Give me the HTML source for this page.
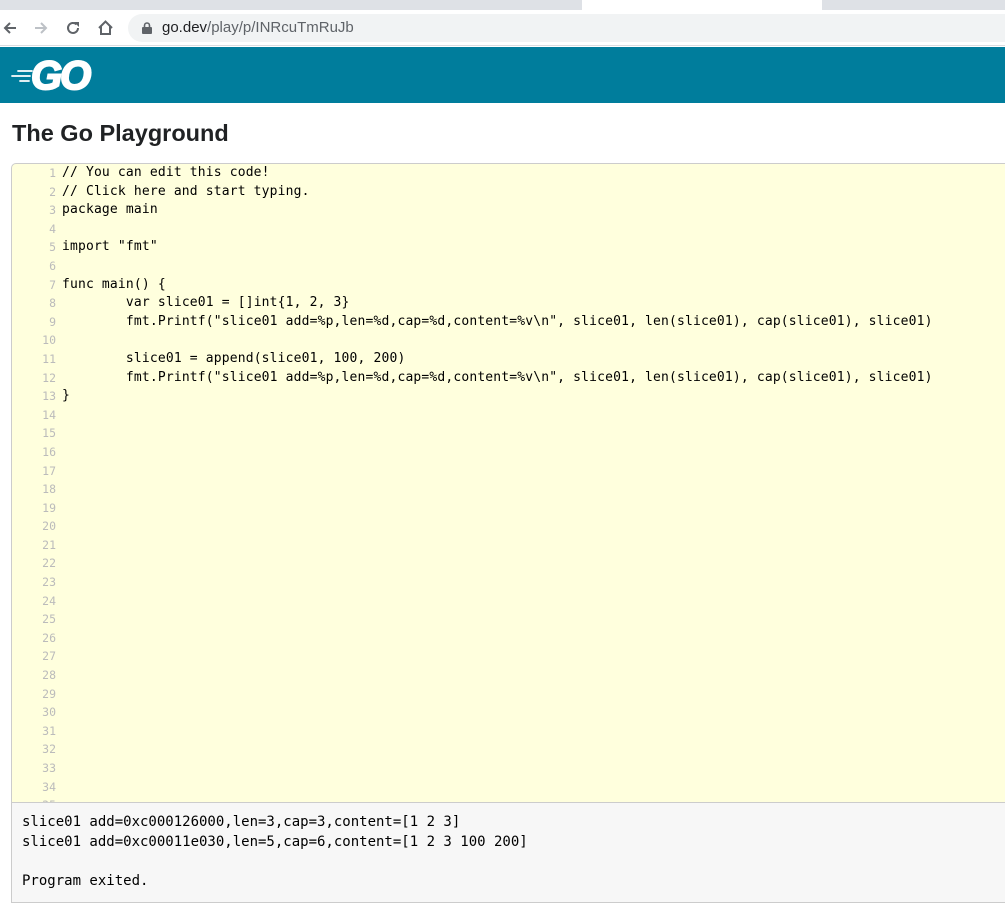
<!DOCTYPE html>
<html><head><style>
*{margin:0;padding:0;box-sizing:border-box}
body{width:1005px;height:903px;overflow:hidden;background:#fff;font-family:"Liberation Sans",sans-serif;position:relative}
.tabbar{position:absolute;left:0;top:0;width:1005px;height:10px;background:#dee1e6}
.tab{position:absolute;top:0;height:10px;background:#fff}
.addr{position:absolute;left:0;top:10px;width:1005px;height:36px;background:#fff;border-bottom:1px solid #dadce0}
.omni{position:absolute;left:128px;top:4px;width:900px;height:28px;border-radius:14px;background:#f1f3f4}
.url{position:absolute;left:162px;top:9px;font-size:15px;color:#202124}
.url span{color:#5f6368}
.hdr{position:absolute;left:0;top:47px;width:1005px;height:56px;background:#007d9c}
h1{position:absolute;left:12px;top:120px;font-size:23.5px;font-weight:bold;color:#202224}
.ed{position:absolute;left:11px;top:163px;width:1010px;height:740px;border:1px solid #ccc;border-radius:5px 0 0 0;background:#ffffdd;overflow:hidden}
.ln{position:absolute;left:0;top:0;width:44px;text-align:right;font-family:"DejaVu Sans Mono",monospace;font-size:11.5px;color:#bbb;line-height:18.6px}
.code{position:absolute;left:50px;top:0;font-family:"DejaVu Sans Mono",monospace;font-size:13px;letter-spacing:0.16px;line-height:18.6px;color:#000;white-space:pre;tab-size:8}
.out{position:absolute;left:0;top:638px;width:1010px;height:110px;background:#f7f7f7;border-top:1px solid #ccc;font-family:"DejaVu Sans Mono",monospace;font-size:14px;line-height:19.5px;color:#000;white-space:pre;padding:10px 0 0 10px}
</style></head><body>
<div class="tabbar">
<div class="tab" style="left:0;width:100px;background:#dee1e6"></div>
<div class="tab" style="left:582px;width:240px"></div>
</div>
<div class="addr">
<svg style="position:absolute;left:2px;top:10px" width="16" height="16" viewBox="0 0 16 16"><path d="M14 8H3M8 3L3 8l5 5" stroke="#5f6368" stroke-width="2" fill="none"/></svg>
<svg style="position:absolute;left:33px;top:10px" width="16" height="16" viewBox="0 0 16 16"><path d="M2 8h11M8 3l5 5-5 5" stroke="#bdc1c6" stroke-width="2" fill="none"/></svg>
<svg style="position:absolute;left:65px;top:10px" width="16" height="16" viewBox="0 0 16 16"><path d="M13 8a5 5 0 1 1-1.5-3.6" stroke="#5f6368" stroke-width="2" fill="none"/><path d="M9 2h5v5z" fill="#5f6368"/></svg>
<svg style="position:absolute;left:97px;top:9px" width="17" height="17" viewBox="0 0 17 17"><path d="M2 9L8.5 2.5 15 9M4 7.5V15h9V7.5" stroke="#5f6368" stroke-width="2" fill="none"/></svg>
<div class="omni"></div>
<svg style="position:absolute;left:142px;top:12px" width="10" height="12" viewBox="0 0 10 12"><rect x="0" y="5" width="10" height="7" rx="1" fill="#5f6368"/><path d="M2.5 5V3.5a2.5 2.5 0 0 1 5 0V5" stroke="#5f6368" stroke-width="1.6" fill="none"/></svg>
<div class="url">go.dev<span>/play/p/INRcuTmRuJb</span></div>
</div>
<div class="hdr">
<svg style="position:absolute;left:10px;top:10px" width="90" height="36" viewBox="0 0 90 36">
<g stroke="#fff" stroke-width="1.8" stroke-linecap="round"><path d="M8 14h14M2 19h18M10 24h9"/></g>
<text x="21" y="32" font-family="Liberation Sans" font-weight="bold" font-style="italic" font-size="40" fill="#fff" stroke="#fff" stroke-width="2" letter-spacing="-2">GO</text>
</svg>
</div>
<h1>The Go Playground</h1>
<div class="ed">
<div class="ln">1<br>2<br>3<br>4<br>5<br>6<br>7<br>8<br>9<br>10<br>11<br>12<br>13<br>14<br>15<br>16<br>17<br>18<br>19<br>20<br>21<br>22<br>23<br>24<br>25<br>26<br>27<br>28<br>29<br>30<br>31<br>32<br>33<br>34<br>35</div>
<div class="code">// You can edit this code!
// Click here and start typing.
package main

import "fmt"

func main() {
	var slice01 = []int{1, 2, 3}
	fmt.Printf("slice01 add=%p,len=%d,cap=%d,content=%v\n", slice01, len(slice01), cap(slice01), slice01)

	slice01 = append(slice01, 100, 200)
	fmt.Printf("slice01 add=%p,len=%d,cap=%d,content=%v\n", slice01, len(slice01), cap(slice01), slice01)
}</div>
<div class="out">slice01 add=0xc000126000,len=3,cap=3,content=[1 2 3]
slice01 add=0xc00011e030,len=5,cap=6,content=[1 2 3 100 200]

Program exited.</div>
</div>
</body></html>
